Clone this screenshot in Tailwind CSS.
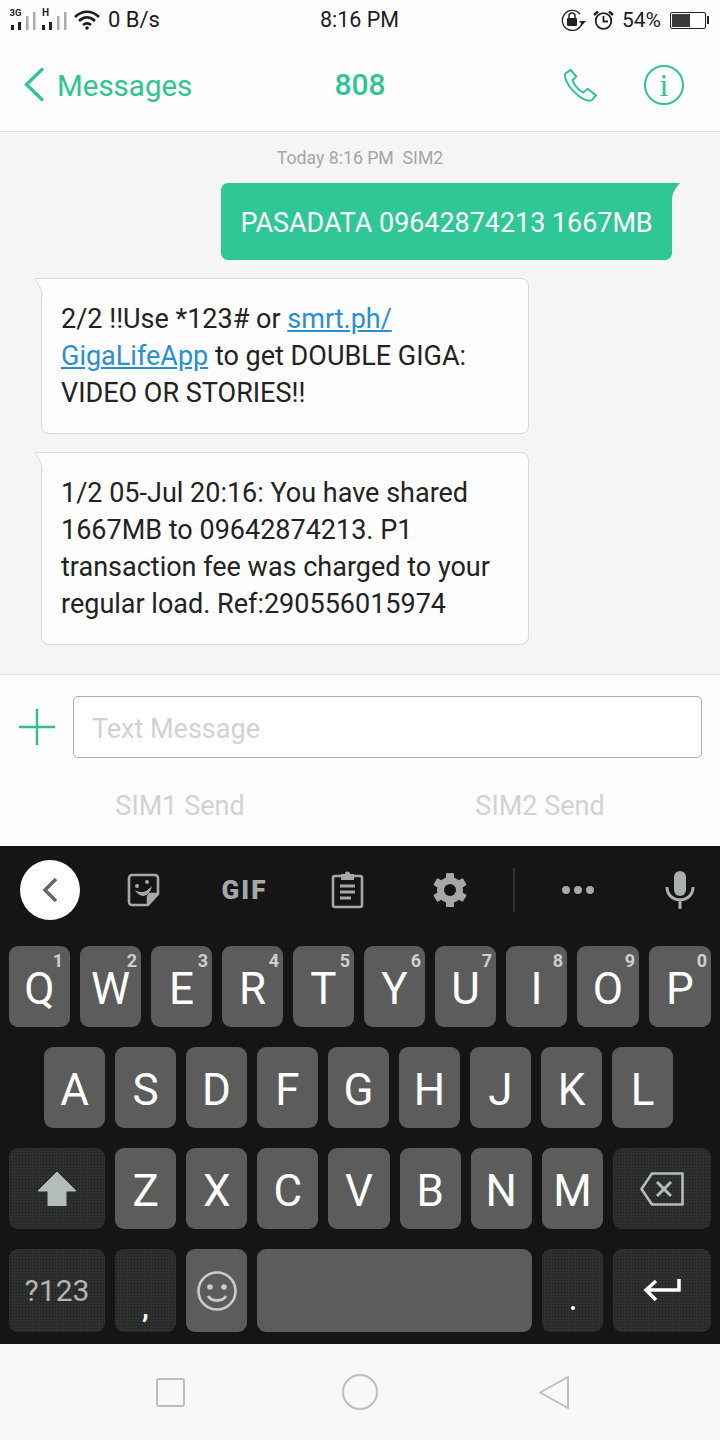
<!DOCTYPE html>
<html lang="en">
<head>
    <meta charset="UTF-8">
    <meta name="viewport" content="width=device-width, initial-scale=1.0">
    <title>808</title>
    <script src="https://cdn.jsdelivr.net/npm/@tailwindcss/browser@4"></script>
</head>
<body class="font-['Roboto',sans-serif]">
<div class="flex h-[1440px] w-[720px] flex-col overflow-hidden bg-white">

    <!-- status bar -->
    <div class="flex h-[40px] items-center justify-between bg-[#fdfdfd] pr-[11px] pl-[10px] text-[#1c1c1c]">
        <div class="flex w-[240px] items-center">
            <svg width="60" height="26" viewBox="0 0 60 26" fill="#222">
                <text x="-.5" y="9" font-family="Roboto" font-size="9.500" font-weight="700">3G</text>
                <rect x="1" y="18" width="3" height="5"/><rect x="8" y="15" width="3" height="8"/>
                <rect x="16" y="9" width="2.5" height="14" fill="#aaa"/><rect x="23" y="5" width="2.5" height="18" fill="#aaa"/>
                <text x="32" y="9" font-family="Roboto" font-size="10" font-weight="700">H</text>
                <rect x="32" y="18" width="3" height="5"/><rect x="39" y="15" width="3" height="8"/>
                <rect x="47" y="9" width="2.5" height="14" fill="#aaa"/><rect x="54" y="5" width="2.5" height="18" fill="#aaa"/>
            </svg>
            <svg class="ml-[4px]" width="26" height="20" viewBox="0 0 26 20" fill="none" stroke="#1c1c1c" stroke-width="2.600">
                <path d="M1 7 C8 0 18 0 25 7"/><path d="M5 11 C10 6 16 6 21 11"/><path d="M9 15 C11.500 13 14.500 13 17 15"/>
                <circle cx="13" cy="18" r="1.800" fill="#1c1c1c" stroke="none"/>
            </svg>
            <span class="ml-[8px] text-[22px] leading-none">0 B/s</span>
        </div>
        <span class="text-[21.500px] leading-none">8:16 PM</span>
        <div class="flex w-[240px] items-center justify-end">
            <svg width="26" height="22" viewBox="0 0 26 22" fill="none">
                <path d="M22 14 A10 10 0 1 1 20 5" stroke="#222" stroke-width="1.300" transform="translate(-1 0)"/>
                <path d="M18 12 L25 12 L21.500 16 Z" fill="#222"/>
                <rect x="6" y="9" width="10" height="8" rx="1" fill="#222"/>
                <path d="M8 9 V7 A3 3 0 0 1 14 7 V9" stroke="#222" stroke-width="1.500"/>
            </svg>
            <svg class="ml-[6px]" width="21" height="20" viewBox="0 0 21 20" fill="none" stroke="#222" stroke-width="1.800">
                <circle cx="10.500" cy="11" r="7.800"/><path d="M10.500 6 V11.500 H15"/>
                <path d="M1 5 L5 1.500 M20 5 L16 1.500" stroke-width="2.400"/>
            </svg>
            <span class="ml-[8px] text-[21px] leading-none">54%</span>
            <div class="ml-[9px] flex h-[17px] w-[36px] rounded-[2px] border border-[#222] p-[1px]">
                <div class="h-full w-[18px] bg-[#3a3a3a]"></div>
            </div>
            <div class="ml-[1px] h-[8px] w-[2px] bg-[#222]"></div>
        </div>
    </div>

    <!-- title bar -->
    <div class="flex h-[92px] items-center justify-between border-b border-[#dedede] bg-[#fdfdfd] pb-[2px] text-[#2fc494]">
        <div class="flex w-[240px] items-center pl-[24px]">
            <svg width="21" height="35" viewBox="0 0 21 35" fill="none" stroke="#2fc494" stroke-width="3.200"><path d="M19 1.500 L2.500 17.500 L19 33.500"/></svg>
            <span class="ml-[12px] pt-[4px] text-[29.500px] leading-none">Messages</span>
        </div>
        <span class="text-[30px] leading-none font-medium">808</span>
        <div class="flex w-[240px] items-center justify-end pr-[36px]">
            <svg width="34" height="34" viewBox="0 0 36 36" fill="none" stroke="#2fc494" stroke-width="2.100" stroke-linejoin="round">
                <path d="M8 2 L2.500 6 C1 9 4 17 11 24.500 C19 33 27 36 30.500 34 L35 29 L26 22 L21.500 26 C16 23 12 18 10 13 L14 9 Z"/>
            </svg>
            <div class="ml-[47px] flex h-[40px] w-[40px] items-center justify-center rounded-full border-2 border-[#2fc494] font-['Liberation_Serif',serif] text-[32px] leading-none">i</div>
        </div>
    </div>

    <!-- thread -->
    <div class="flex h-[543px] flex-col border-b border-[#dedede] bg-[#f5f5f5]">
        <div class="h-[51px] pt-[16px] text-center text-[17.700px] leading-[21px] text-[#a6a6a6]">Today 8:16 PM&nbsp; SIM2</div>
        <div class="relative ml-[221px] flex h-[77px] w-[451px] items-center justify-center rounded-[7px] rounded-tr-none bg-[#2fc795] pt-[3px] text-[26.900px] whitespace-nowrap text-white">
            PASADATA 09642874213 1667MB
            <svg class="absolute top-0 -right-[8px]" width="8" height="18" viewBox="0 0 8 18" fill="#2fc795"><path d="M0 0 H8 C4 5 0 9 0 18 Z"/></svg>
        </div>

        <div class="relative mt-[18px] ml-[41px] h-[156px] w-[488px] rounded-[8px] rounded-tl-none border border-[#d9d9d9] bg-[#fdfdfd] px-[19px] pt-[22px] text-[27px] leading-[37px] text-[#222]">
            <svg class="absolute -top-[1px] -left-[8px]" width="9" height="20" viewBox="0 0 9 20"><path d="M9 1 H0 C4 6 8 9 8 20 H9 Z" fill="#fdfdfd"/><path d="M9 .5 H.500 C4 6 8 9 8 20" fill="none" stroke="#d9d9d9"/></svg>
            2/2 !!Use *123# or <span class="text-[#2a8fd0] underline">smrt.ph/</span><br>
            <span class="text-[#2a8fd0] underline">GigaLifeApp</span> to get DOUBLE GIGA:<br>
            VIDEO OR STORIES!!
        </div>

        <div class="relative mt-[18px] ml-[41px] h-[193px] w-[488px] rounded-[8px] rounded-tl-none border border-[#d9d9d9] bg-[#fdfdfd] px-[19px] pt-[22px] text-[27px] leading-[37px] text-[#222]">
            <svg class="absolute -top-[1px] -left-[8px]" width="9" height="20" viewBox="0 0 9 20"><path d="M9 1 H0 C4 6 8 9 8 20 H9 Z" fill="#fdfdfd"/><path d="M9 .5 H.500 C4 6 8 9 8 20" fill="none" stroke="#d9d9d9"/></svg>
            1/2 05-Jul 20:16: You have shared<br>
            1667MB to 09642874213. P1<br>
            transaction fee was charged to your<br>
            regular load. Ref:290556015974
        </div>
    </div>

    <!-- composer -->
    <div class="flex h-[171px] flex-col bg-[#fdfdfd] pt-[21px]">
        <div class="flex items-center pr-[18px] pl-[19px]">
            <svg width="36" height="36" viewBox="0 0 36 36" stroke="#35bd8e" stroke-width="2.400"><path d="M0 18 H36 M18 0 V36"/></svg>
            <div class="ml-[18px] flex h-[62px] flex-1 items-center rounded-[5px] border border-[#aeaeae] bg-white pt-[5px] pl-[18px] text-[27px] text-[#d2d2d2]">Text Message</div>
        </div>
        <div class="mt-[30px] flex text-center text-[27px] leading-[36px] text-[#d2d2d2]">
            <div class="flex-1">SIM1 Send</div>
            <div class="flex-1">SIM2 Send</div>
        </div>
    </div>

    <!-- keyboard -->
    <div class="flex h-[498px] flex-col bg-[#151515]">
        <div class="relative flex h-[100px] items-center pb-[12px] text-[#a6a8a7]">
            <div class="ml-[20px] flex h-[60px] w-[60px] items-center justify-center rounded-full bg-white">
                <svg width="16" height="26" viewBox="0 0 16 26" fill="none" stroke="#666" stroke-width="3.500"><path d="M14 2 L3 13 L14 24"/></svg>
            </div>
            <svg class="ml-[47px]" width="33" height="34" viewBox="0 0 33 34" fill="none" stroke="#a6a8a7" stroke-width="2.600" stroke-linejoin="round">
                <path d="M5 2 H28 A3 3 0 0 1 31 5 V21 L21 32 H5 A3 3 0 0 1 2 29 V5 A3 3 0 0 1 5 2 Z"/>
                <path d="M21 32 V24 A3 3 0 0 1 24 21 H31" fill="#a6a8a7"/>
                <path d="M8 17 C14 21 20 19 25 13 C22 26 12 25 8 17 Z" fill="#a6a8a7" stroke="none"/>
                <circle cx="10" cy="13" r="2" fill="#a6a8a7" stroke="none"/><circle cx="20" cy="9" r="2" fill="#a6a8a7" stroke="none"/>
            </svg>
            <span class="ml-[60px] w-[49px] text-center text-[26px] leading-none font-black tracking-[2px] whitespace-nowrap">GIF</span>
            <svg class="ml-[62px]" width="33" height="38" viewBox="0 0 33 38" fill="none" stroke="#a6a8a7" stroke-width="2.600">
                <rect x="2" y="5" width="29" height="31" rx="2"/>
                <path d="M10 3 H14 A2.500 2.500 0 0 1 19 3 H23 V9 H10 Z" fill="#a6a8a7" stroke="none"/>
                <path d="M9 15 H24 M9 21 H24 M9 27 H20" stroke-width="2.800"/>
            </svg>
            <svg class="ml-[68px]" width="36" height="36" viewBox="0 0 36 36" fill="#a6a8a7">
                <circle cx="18" cy="18" r="13"/>
                <rect x="14" y="1" width="8" height="34" rx="1"/>
                <rect x="14" y="1" width="8" height="34" rx="1" transform="rotate(60 18 18)"/>
                <rect x="14" y="1" width="8" height="34" rx="1" transform="rotate(120 18 18)"/>
                <circle cx="18" cy="18" r="6" fill="#151515"/>
            </svg>
            <div class="ml-[45px] h-[44px] w-[2px] bg-[#333]"></div>
            <div class="ml-[47px] flex gap-[4px]">
                <div class="h-[8px] w-[8px] rounded-full bg-[#a6a8a7]"></div>
                <div class="h-[8px] w-[8px] rounded-full bg-[#a6a8a7]"></div>
                <div class="h-[8px] w-[8px] rounded-full bg-[#a6a8a7]"></div>
            </div>
            <svg class="ml-[71px]" width="30" height="40" viewBox="0 0 30 40" fill="none" stroke="#a9b0ad" stroke-width="3">
                <rect x="9" y="1" width="12" height="25" rx="6" fill="#a9b0ad" stroke="none"/>
                <path d="M2 17 C2 34 28 34 28 17 M15 29 V39"/>
            </svg>
        </div>

        <div class="flex flex-col gap-[20px] px-[9px]">
            <div class="flex h-[81px] gap-[10px] text-[44px] text-white *:pt-[4px]">
                <div class="relative flex w-[61px] items-center justify-center rounded-[9px] bg-[#5c5c5c]">Q<span class="absolute top-[6px] right-[7px] text-[18px] leading-none font-bold text-[#cfcfcf]">1</span></div>
                <div class="relative flex w-[61px] items-center justify-center rounded-[9px] bg-[#5c5c5c]">W<span class="absolute top-[6px] right-[4px] text-[18px] leading-none font-bold text-[#cfcfcf]">2</span></div>
                <div class="relative flex w-[61px] items-center justify-center rounded-[9px] bg-[#5c5c5c]">E<span class="absolute top-[6px] right-[4px] text-[18px] leading-none font-bold text-[#cfcfcf]">3</span></div>
                <div class="relative flex w-[61px] items-center justify-center rounded-[9px] bg-[#5c5c5c]">R<span class="absolute top-[6px] right-[4px] text-[18px] leading-none font-bold text-[#cfcfcf]">4</span></div>
                <div class="relative flex w-[61px] items-center justify-center rounded-[9px] bg-[#5c5c5c]">T<span class="absolute top-[6px] right-[4px] text-[18px] leading-none font-bold text-[#cfcfcf]">5</span></div>
                <div class="relative flex w-[61px] items-center justify-center rounded-[9px] bg-[#5c5c5c]">Y<span class="absolute top-[6px] right-[4px] text-[18px] leading-none font-bold text-[#cfcfcf]">6</span></div>
                <div class="relative flex w-[61px] items-center justify-center rounded-[9px] bg-[#5c5c5c]">U<span class="absolute top-[6px] right-[4px] text-[18px] leading-none font-bold text-[#cfcfcf]">7</span></div>
                <div class="relative flex w-[61px] items-center justify-center rounded-[9px] bg-[#5c5c5c]">I<span class="absolute top-[6px] right-[4px] text-[18px] leading-none font-bold text-[#cfcfcf]">8</span></div>
                <div class="relative flex w-[62px] items-center justify-center rounded-[9px] bg-[#5c5c5c]">O<span class="absolute top-[6px] right-[4px] text-[18px] leading-none font-bold text-[#cfcfcf]">9</span></div>
                <div class="relative flex w-[62px] items-center justify-center rounded-[9px] bg-[#5c5c5c]">P<span class="absolute top-[6px] right-[4px] text-[18px] leading-none font-bold text-[#cfcfcf]">0</span></div>
            </div>
            <div class="flex h-[81px] gap-[10px] pl-[35px] text-[44px] text-white *:w-[61px] *:pt-[4px]">
                <div class="flex items-center justify-center rounded-[9px] bg-[#5c5c5c]">A</div>
                <div class="flex items-center justify-center rounded-[9px] bg-[#5c5c5c]">S</div>
                <div class="flex items-center justify-center rounded-[9px] bg-[#5c5c5c]">D</div>
                <div class="flex items-center justify-center rounded-[9px] bg-[#5c5c5c]">F</div>
                <div class="flex items-center justify-center rounded-[9px] bg-[#5c5c5c]">G</div>
                <div class="flex items-center justify-center rounded-[9px] bg-[#5c5c5c]">H</div>
                <div class="flex items-center justify-center rounded-[9px] bg-[#5c5c5c]">J</div>
                <div class="flex items-center justify-center rounded-[9px] bg-[#5c5c5c]">K</div>
                <div class="flex items-center justify-center rounded-[9px] bg-[#5c5c5c]">L</div>
            </div>
            <div class="flex h-[81px] gap-[10px] text-[44px] text-white">
                <div class="flex w-[96px] items-center justify-center rounded-[9px] bg-[#2e302f] bg-[radial-gradient(#1b1b1b_0.8px,transparent_1px)] bg-[length:3px_3px]">
                    <svg width="38" height="34" viewBox="0 0 38 34" fill="#b4bcb9"><path d="M19 0 L38 19 H28 V34 H10 V19 H0 Z" stroke="#b4bcb9" stroke-linejoin="round"/></svg>
                </div>
                <div class="flex flex-1 items-center justify-center rounded-[9px] bg-[#5c5c5c] pt-[4px]">Z</div>
                <div class="flex flex-1 items-center justify-center rounded-[9px] bg-[#5c5c5c] pt-[4px]">X</div>
                <div class="flex flex-1 items-center justify-center rounded-[9px] bg-[#5c5c5c] pt-[4px]">C</div>
                <div class="flex flex-1 items-center justify-center rounded-[9px] bg-[#5c5c5c] pt-[4px]">V</div>
                <div class="flex flex-1 items-center justify-center rounded-[9px] bg-[#5c5c5c] pt-[4px]">B</div>
                <div class="flex flex-1 items-center justify-center rounded-[9px] bg-[#5c5c5c] pt-[4px]">N</div>
                <div class="flex flex-1 items-center justify-center rounded-[9px] bg-[#5c5c5c] pt-[4px]">M</div>
                <div class="flex w-[98px] items-center justify-center rounded-[9px] bg-[#2e302f] bg-[radial-gradient(#1b1b1b_0.8px,transparent_1px)] bg-[length:3px_3px]">
                    <svg width="44" height="34" viewBox="0 0 44 34" fill="none" stroke="#b4bcb9" stroke-width="2.600" stroke-linejoin="round">
                        <path d="M12 1.500 H42.500 V32.500 H12 L1.500 17 Z"/>
                        <path d="M17 10 L31 24 M31 10 L17 24" stroke-width="3"/>
                    </svg>
                </div>
            </div>
            <div class="flex h-[83px] gap-[10px] text-white">
                <div class="flex w-[96px] items-center justify-center rounded-[9px] bg-[#2e302f] bg-[radial-gradient(#1b1b1b_0.8px,transparent_1px)] bg-[length:3px_3px] text-[30px] text-[#b4b4b4]">?123</div>
                <div class="flex w-[61px] items-end justify-center rounded-[9px] bg-[#2e302f] bg-[radial-gradient(#1b1b1b_0.8px,transparent_1px)] bg-[length:3px_3px] pb-[10px] text-[28px] leading-none font-bold">,</div>
                <div class="flex w-[61px] items-center justify-center rounded-[9px] bg-[#5c5c5c]">
                    <svg width="40" height="40" viewBox="0 0 40 40" fill="none" stroke="#c9cccb" stroke-width="2.600">
                        <circle cx="20" cy="20" r="18.500"/>
                        <path d="M11 25 C15 31 25 31 29 25" stroke-width="3"/>
                        <circle cx="13" cy="16" r="2.800" fill="#c9cccb" stroke="none"/><circle cx="27" cy="16" r="2.800" fill="#c9cccb" stroke="none"/>
                    </svg>
                </div>
                <div class="flex-1 rounded-[9px] bg-[#5c5c5c]"></div>
                <div class="flex w-[61px] items-end justify-center rounded-[9px] bg-[#2e302f] bg-[radial-gradient(#1b1b1b_0.8px,transparent_1px)] bg-[length:3px_3px] pb-[22px]">
                    <div class="h-[4px] w-[4px] rounded-full bg-white"></div>
                </div>
                <div class="flex w-[98px] items-center justify-center rounded-[9px] bg-[#2e302f] bg-[radial-gradient(#1b1b1b_0.8px,transparent_1px)] bg-[length:3px_3px]">
                    <svg width="38" height="24" viewBox="0 0 38 24" fill="none" stroke="#fff" stroke-width="3.500"><path d="M36 0 V11 H3 M13 2 L3 11 L13 21"/></svg>
                </div>
            </div>
        </div>
    </div>

    <!-- nav bar -->
    <div class="flex flex-1 items-center justify-center bg-[#f7f8f8] pl-[6px]">
        <div class="h-[29px] w-[29px] rounded-[3px] border-2 border-[#bdbdbd]"></div>
        <div class="ml-[157px] h-[36px] w-[36px] rounded-full border-2 border-[#bdbdbd]"></div>
        <svg class="ml-[160px]" width="32" height="35" viewBox="0 0 32 35" fill="none" stroke="#bdbdbd" stroke-width="2" stroke-linejoin="round"><path d="M30 2 V33 L2 17.500 Z"/></svg>
    </div>
</div>
</body>
</html>
